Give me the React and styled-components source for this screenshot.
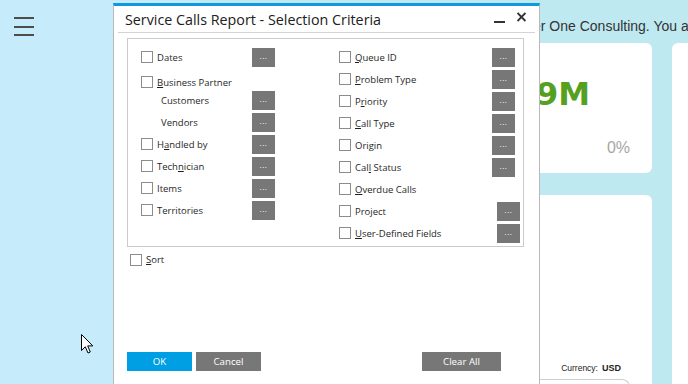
import React from 'react';
import styled, { createGlobalStyle } from 'styled-components';

const GlobalStyle = createGlobalStyle`
  html, body {
    margin: 0;
    padding: 0;
  }
  body {
    width: 688px;
    height: 384px;
    overflow: hidden;
    font-family: "Liberation Sans", Arial, sans-serif;
  }
`;

const Page = styled.div`
  position: relative;
  display: flex;
  width: 688px;
  height: 384px;
  overflow: hidden;
  background: #bfe9f1;
`;

const Sidebar = styled.aside`
  flex: none;
  width: 200px;
  box-sizing: border-box;
  padding: 17px 0 0 14px;
  background: #c6ecfb;
`;

const MenuIcon = styled.div`
  display: flex;
  flex-direction: column;
  gap: 6.5px;
  width: 20px;

  span {
    height: 2px;
    background: #4d4d4d;
  }
`;

const Main = styled.main`
  flex: none;
  width: 488px;
  display: flex;
  flex-direction: column;
`;

const Header = styled.header`
  flex: none;
  height: 43px;
  box-sizing: border-box;
  padding: 18px 0 0 222px;
  font-size: 14px;
  color: #333;
  white-space: nowrap;
  overflow: hidden;
`;

const Cards = styled.div`
  flex: none;
  display: grid;
  grid-template-columns: 432px 200px;
  grid-template-rows: 130px 260px;
  gap: 22px 20px;
  padding-left: 20px;
`;

const Card = styled.section`
  background: #fff;
  border-radius: 6px;
  display: flex;
  flex-direction: column;
  align-items: flex-end;
  grid-column: ${p => p.$col};
  grid-row: ${p => p.$row};
`;

const BigValue = styled.div`
  margin: 32px 62px 0 0;
  font-family: "DejaVu Sans", Verdana, sans-serif;
  font-size: 32px;
  font-weight: bold;
  color: #55a01e;
`;

const Percent = styled.div`
  margin: 26px 22px 0 0;
  font-size: 16px;
  color: #a6a6a6;
`;

const Currency = styled.div`
  margin: 168px 31px 0 0;
  font-size: 8.5px;
  color: #222;

  b {
    font-size: 9px;
    font-weight: 600;
    margin-left: 4px;
  }
`;

const CardFoot = styled.div`
  align-self: stretch;
  margin: 6px 22px 0 0;
  height: 20px;
  border: 1px solid #cfcfcf;
  border-left: none;
  border-bottom: none;
  border-radius: 0 8px 0 0;
`;

const Dialog = styled.div`
  position: absolute;
  left: 113px;
  top: 3px;
  width: 427px;
  height: 392px;
  box-sizing: border-box;
  display: flex;
  flex-direction: column;
  background: #fff;
  border: 1px solid #b8b8b8;
  border-top: 3px solid #0f98e0;
  font-family: "Open Sans", "Liberation Sans", sans-serif;
  color: #1f1f1f;
`;

const TitleBar = styled.div`
  display: flex;
  align-items: center;
  height: 26px;
  padding: 0 13px 0 11px;
`;

const Title = styled.div`
  flex: 1;
  font-size: 14.3px;
  color: #202020;
  white-space: nowrap;
`;

const WindowButtons = styled.div`
  display: flex;
  align-items: center;
  gap: 12px;
`;

const Separator = styled.div`
  height: 1px;
  margin: 0 4px;
  background: #d4d4d4;
`;

const Panel = styled.div`
  width: 397px;
  height: 209px;
  box-sizing: border-box;
  margin: 5px 0 0 13px;
  padding: 7px 0 0 13px;
  border: 1px solid #cbcbcb;
  display: grid;
  grid-template-columns: 198px 1fr;
`;

const Column = styled.div`
  display: flex;
  flex-direction: column;
`;

const Row = styled.div`
  display: flex;
  align-items: center;
  box-sizing: border-box;
  height: ${p => p.$h || 22}px;
  padding-top: ${p => p.$pt || 0}px;
`;

const LabelCell = styled.div`
  display: flex;
  align-items: center;
  flex: none;
  box-sizing: border-box;
  width: ${p => p.$w}px;
  padding-left: ${p => p.$indent || 0}px;
`;

const Box = styled.span`
  flex: none;
  width: 12px;
  height: 12px;
  box-sizing: border-box;
  margin-right: 4px;
  border: 1px solid #8c8c8c;
  background: #fff;
`;

const Label = styled.span`
  font-size: 9.5px;
  white-space: nowrap;

  u {
    text-decoration: underline;
    text-underline-offset: 1px;
  }
`;

const DotsButton = styled.button`
  width: 23px;
  height: 19px;
  flex: none;
  border: 0;
  padding: 0;
  background: #777;
  color: #fff;
  font-family: inherit;
  font-size: 8px;
  line-height: 8px;
  letter-spacing: 0.5px;
  display: flex;
  align-items: center;
  justify-content: center;
  overflow: hidden;

  span {
    display: block;
    height: 8px;
    margin-top: -2px;
  }
`;

const SortRow = styled.div`
  display: flex;
  align-items: center;
  margin: 6px 0 0 16px;
`;

const Spacer = styled.div`
  flex: 1;
`;

const Footer = styled.div`
  display: flex;
  gap: 4px;
  padding: 0 38px 23px 13px;
`;

const ActionButton = styled.button`
  width: ${p => p.$w || 65}px;
  height: 19px;
  border: 0;
  padding: 0;
  margin-left: ${p => p.$push ? 'auto' : '0'};
  background: ${p => p.$primary ? '#009ee3' : '#777'};
  color: #fff;
  font-family: inherit;
  font-size: 9.7px;
`;

const Cursor = styled.svg`
  position: absolute;
  left: 81px;
  top: 334px;
`;

const leftRows = [
  { text: 'Dates', dots: true },
  { text: '&Business Partner', h: 21, pt: 7 },
  { text: 'Customers', dots: true, indent: 20, noBox: true },
  { text: 'Vendors', dots: true, indent: 20, noBox: true },
  { text: 'H&andled by', dots: true },
  { text: 'Tech&nician', dots: true },
  { text: 'Items', dots: true },
  { text: 'Territories', dots: true },
];

const rightRows = [
  { text: '&Queue ID', dots: true },
  { text: '&Problem Type', dots: true },
  { text: 'P&riority', dots: true },
  { text: '&Call Type', dots: true },
  { text: 'Origin', dots: true },
  { text: 'Cal&l Status', dots: true },
  { text: '&Overdue Calls' },
  { text: 'Project', dots: true, w: 158 },
  { text: '&User-Defined Fields', dots: true, w: 158 },
];

const renderLabel = (text) => {
  const i = text.indexOf('&');
  if (i < 0) return text;
  return (
    <>
      {text.slice(0, i)}
      <u>{text[i + 1]}</u>
      {text.slice(i + 2)}
    </>
  );
};

const CriteriaRow = ({ row, width }) => (
  <Row $h={row.h} $pt={row.pt}>
    <LabelCell $w={row.w || width} $indent={row.indent}>
      {!row.noBox && <Box />}
      <Label>{renderLabel(row.text)}</Label>
    </LabelCell>
    {row.dots && <DotsButton><span>...</span></DotsButton>}
  </Row>
);

const App = () => {
  return (
    <Page>
      <GlobalStyle />
      <Sidebar>
        <MenuIcon>
          <span />
          <span />
          <span />
        </MenuIcon>
      </Sidebar>
      <Main>
        <Header>Welcome to Partner One Consulting. You are logged in as manager</Header>
        <Cards>
          <Card $col="1" $row="1">
            <BigValue>$1.9M</BigValue>
            <Percent>0%</Percent>
          </Card>
          <Card $col="1" $row="2">
            <Currency>
              Currency:<b>USD</b>
            </Currency>
            <CardFoot />
          </Card>
          <Card $col="2" $row="1 / span 2" />
        </Cards>
      </Main>

      <Dialog>
        <TitleBar>
          <Title>Service Calls Report - Selection Criteria</Title>
          <WindowButtons>
            <svg width="11" height="18" viewBox="0 0 11 18">
              <rect x="0" y="11" width="11" height="2" fill="#333" />
            </svg>
            <svg width="9" height="18" viewBox="0 0 9 18">
              <path d="M0.6 3 L8.4 11 M8.4 3 L0.6 11" stroke="#333" strokeWidth="1.8" />
            </svg>
          </WindowButtons>
        </TitleBar>
        <Separator />
        <Panel>
          <Column>
            {leftRows.map(r => <CriteriaRow key={r.text} row={r} width={111} />)}
          </Column>
          <Column>
            {rightRows.map(r => <CriteriaRow key={r.text} row={r} width={153} />)}
          </Column>
        </Panel>
        <SortRow>
          <Box />
          <Label>{renderLabel('&Sort')}</Label>
        </SortRow>
        <Spacer />
        <Footer>
          <ActionButton $primary>OK</ActionButton>
          <ActionButton>Cancel</ActionButton>
          <ActionButton $w={79} $push>Clear All</ActionButton>
        </Footer>
      </Dialog>

      <Cursor width="13" height="20" viewBox="0 0 13 20">
        <path d="M0.5 0.5 L0.5 16.5 L4.3 12.8 L7 19 L9.3 18 L6.7 11.9 L11.8 11.9 Z" fill="#fff" stroke="#000" strokeWidth="1" strokeLinejoin="round" />
      </Cursor>
    </Page>
  );
};

export default App;
